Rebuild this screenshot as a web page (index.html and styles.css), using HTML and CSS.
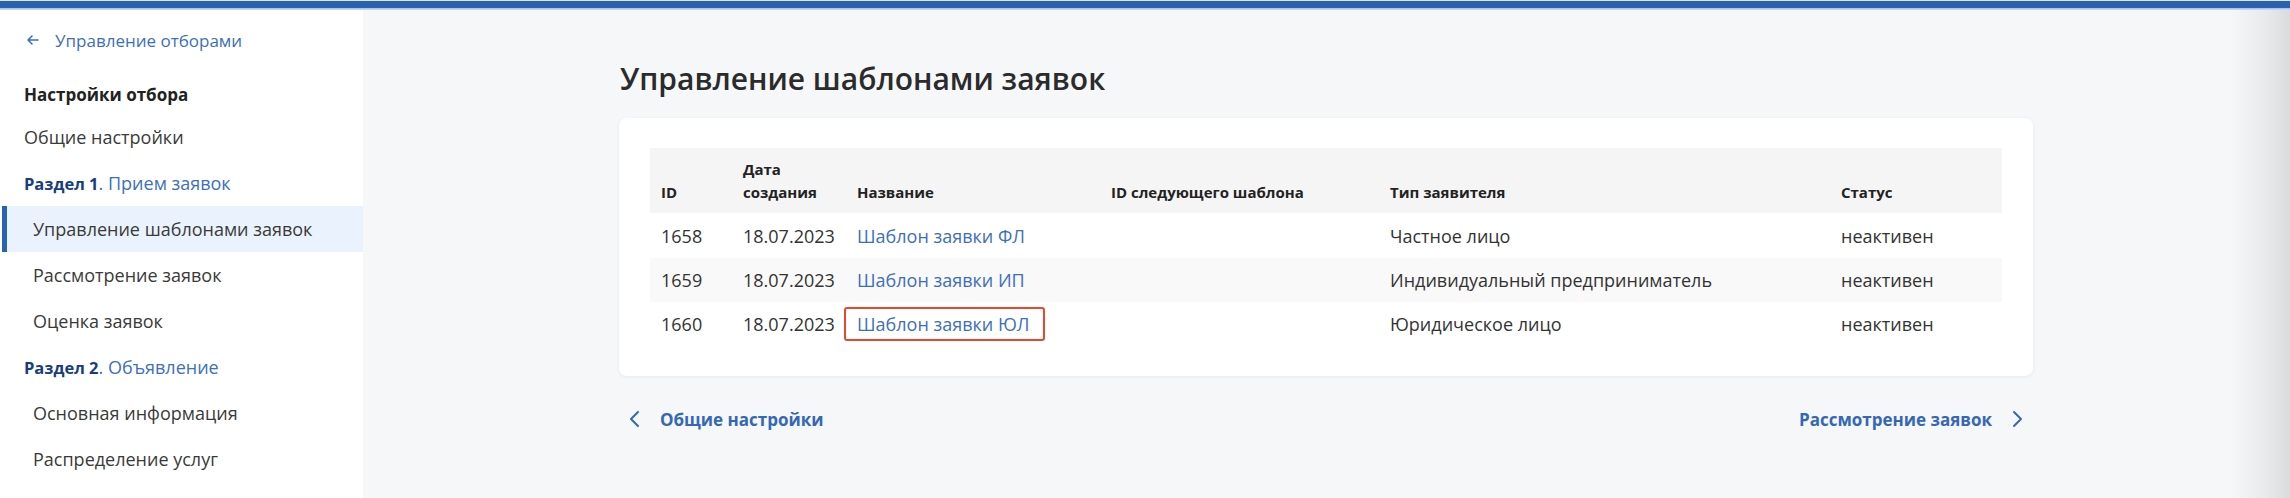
FILE: index.html
```html
<!DOCTYPE html>
<html lang="ru">
<head>
<meta charset="utf-8">
<title>Управление шаблонами заявок</title>
<link rel="stylesheet" href="styles.css">
</head>
<body>
<div class="topbar"></div>
<div class="app">
  <aside class="sidebar">
    <a class="back-link" href="#">
      <svg class="back-icon" width="12" height="10" viewBox="0 0 12 10"><path d="M5 1 L1 5 L5 9 M1 5 H11" fill="none" stroke="currentColor" stroke-width="1.6" stroke-linecap="round" stroke-linejoin="round"/></svg>
      <span>Управление отборами</span>
    </a>
    <div class="side-title">Настройки отбора</div>
    <a class="side-item side-item--top" href="#">Общие настройки</a>
    <div class="side-section"><b>Раздел 1</b>. Прием заявок</div>
    <a class="side-item side-item--active" href="#">Управление шаблонами заявок</a>
    <a class="side-item" href="#">Рассмотрение заявок</a>
    <a class="side-item" href="#">Оценка заявок</a>
    <div class="side-section"><b>Раздел 2</b>. Объявление</div>
    <a class="side-item" href="#">Основная информация</a>
    <a class="side-item" href="#">Распределение услуг</a>
  </aside>
  <main class="main">
    <div class="content">
      <h1 class="page-title">Управление шаблонами заявок</h1>
      <section class="card">
        <table class="grid">
          <colgroup>
            <col class="c-id"><col class="c-date"><col class="c-name"><col class="c-next"><col class="c-type"><col class="c-status">
          </colgroup>
          <thead>
            <tr>
              <th>ID</th>
              <th>Дата<br>создания</th>
              <th>Название</th>
              <th>ID следующего шаблона</th>
              <th>Тип заявителя</th>
              <th>Статус</th>
            </tr>
          </thead>
          <tbody>
            <tr>
              <td>1658</td>
              <td>18.07.2023</td>
              <td><a class="link" href="#">Шаблон заявки ФЛ</a></td>
              <td></td>
              <td>Частное лицо</td>
              <td>неактивен</td>
            </tr>
            <tr class="striped">
              <td>1659</td>
              <td>18.07.2023</td>
              <td><a class="link" href="#">Шаблон заявки ИП</a></td>
              <td></td>
              <td>Индивидуальный предприниматель</td>
              <td>неактивен</td>
            </tr>
            <tr>
              <td>1660</td>
              <td>18.07.2023</td>
              <td><a class="link link--marked" href="#">Шаблон заявки ЮЛ</a></td>
              <td></td>
              <td>Юридическое лицо</td>
              <td>неактивен</td>
            </tr>
          </tbody>
        </table>
      </section>
      <nav class="pager">
        <a class="pager-link" href="#">
          <svg width="11" height="18" viewBox="0 0 11 18"><path d="M9 2 L2 9 L9 16" fill="none" stroke="currentColor" stroke-width="2" stroke-linecap="round" stroke-linejoin="round"/></svg>
          <span>Общие настройки</span>
        </a>
        <a class="pager-link" href="#">
          <span>Рассмотрение заявок</span>
          <svg width="11" height="18" viewBox="0 0 11 18"><path d="M2 2 L9 9 L2 16" fill="none" stroke="currentColor" stroke-width="2" stroke-linecap="round" stroke-linejoin="round"/></svg>
        </a>
      </nav>
    </div>
  </main>
</div>
</body>
</html>
```

FILE: styles.css
```css
* { box-sizing: border-box; }
html, body { margin: 0; padding: 0; }
body {
  font-family: "Open Sans", "Noto Sans", sans-serif;
  color: #333;
  background: #fff;
  width: 2290px;
  height: 498px;
  overflow: hidden;
}
a { text-decoration: none; }

.topbar {
  height: 10px;
  border-top: 1px solid #dfe7f3;
  background: linear-gradient(to bottom, #2a62b2 0, #2a62b2 7px, #9fbbe2 7px, #cfdcf0 9px);
}

.app {
  display: flex;
  height: 488px;
}

.sidebar {
  width: 363px;
  flex: none;
  background: #fff;
  padding-top: 10px;
  display: flex;
  flex-direction: column;
}

.back-link {
  height: 40px;
  display: flex;
  align-items: center;
  gap: 16px;
  padding-left: 27px;
  color: #3c6fbe;
  font-size: 17px;
  margin-bottom: 14px;
}
.back-icon { flex: none; }

.side-title {
  height: 40px;
  display: flex;
  align-items: center;
  padding-left: 24px;
  font-size: 17px;
  font-weight: 700;
  color: #222;
}

.side-item {
  height: 46px;
  display: flex;
  align-items: center;
  padding-left: 33px;
  font-size: 18px;
  color: #3a3a3a;
}
.side-item--top { padding-left: 24px; }
.side-item--active {
  background: #eaf3fd;
  border-left: 5px solid #2a62b2;
  margin-left: 2px;
  padding-left: 26px;
}

.side-section {
  height: 46px;
  display: flex;
  align-items: center;
  padding-left: 24px;
  font-size: 18px;
  color: #3c6fbe;
  white-space: pre;
}
.side-section b { color: #163e7e; font-weight: 700; font-size: 16.5px; }

.main {
  flex: 1;
  background: linear-gradient(to right, #f6f7f9 0, #f6f7f9 calc(100% - 60px), #e9eaec calc(100% - 25px), #dadbdd 100%);
  display: flex;
  justify-content: center;
}

.content {
  width: 1414px;
  padding-top: 49px;
  margin-left: -1px;
}

.page-title {
  margin: 0 0 19px 1px;
  height: 40px;
  line-height: 40px;
  font-size: 30px;
  font-weight: 600;
  color: #2b2b2b;
}

.card {
  background: #fff;
  border-radius: 8px;
  box-shadow: 0 1px 4px rgba(0, 0, 0, 0.06);
  padding: 30px 31px 30px 31px;
}

.grid {
  width: 100%;
  border-collapse: collapse;
  table-layout: fixed;
}
.c-id { width: 82px; }
.c-date { width: 114px; }
.c-name { width: 254px; }
.c-next { width: 279px; }
.c-type { width: 451px; }
.c-status { width: 172px; }

.grid th {
  height: 65px;
  background: #f5f5f5;
  text-align: left;
  vertical-align: bottom;
  padding: 0 4px 9px 11px;
  font-size: 15px;
  line-height: 23px;
  font-weight: 700;
  color: #222;
  white-space: nowrap;
}
.grid td {
  height: 44px;
  padding: 0 4px 0 11px;
  font-size: 18px;
  color: #333;
  vertical-align: middle;
  white-space: nowrap;
}
.grid tbody tr:first-child td { height: 45px; }
.grid tr.striped td { background: #f9f9f9; }

.link { color: #3c6fbe; }
.link--marked { position: relative; }
.link--marked::after {
  content: "";
  position: absolute;
  left: -13px;
  right: -16px;
  top: -5px;
  bottom: -5px;
  border: 2px solid #e8492e;
  border-radius: 3px;
}

.pager {
  margin-top: 31px;
  display: flex;
  justify-content: space-between;
  padding: 0 10px;
}
.pager-link {
  display: flex;
  align-items: center;
  gap: 20px;
  height: 24px;
  font-size: 17px;
  font-weight: 700;
  color: #3468b7;
}
```
